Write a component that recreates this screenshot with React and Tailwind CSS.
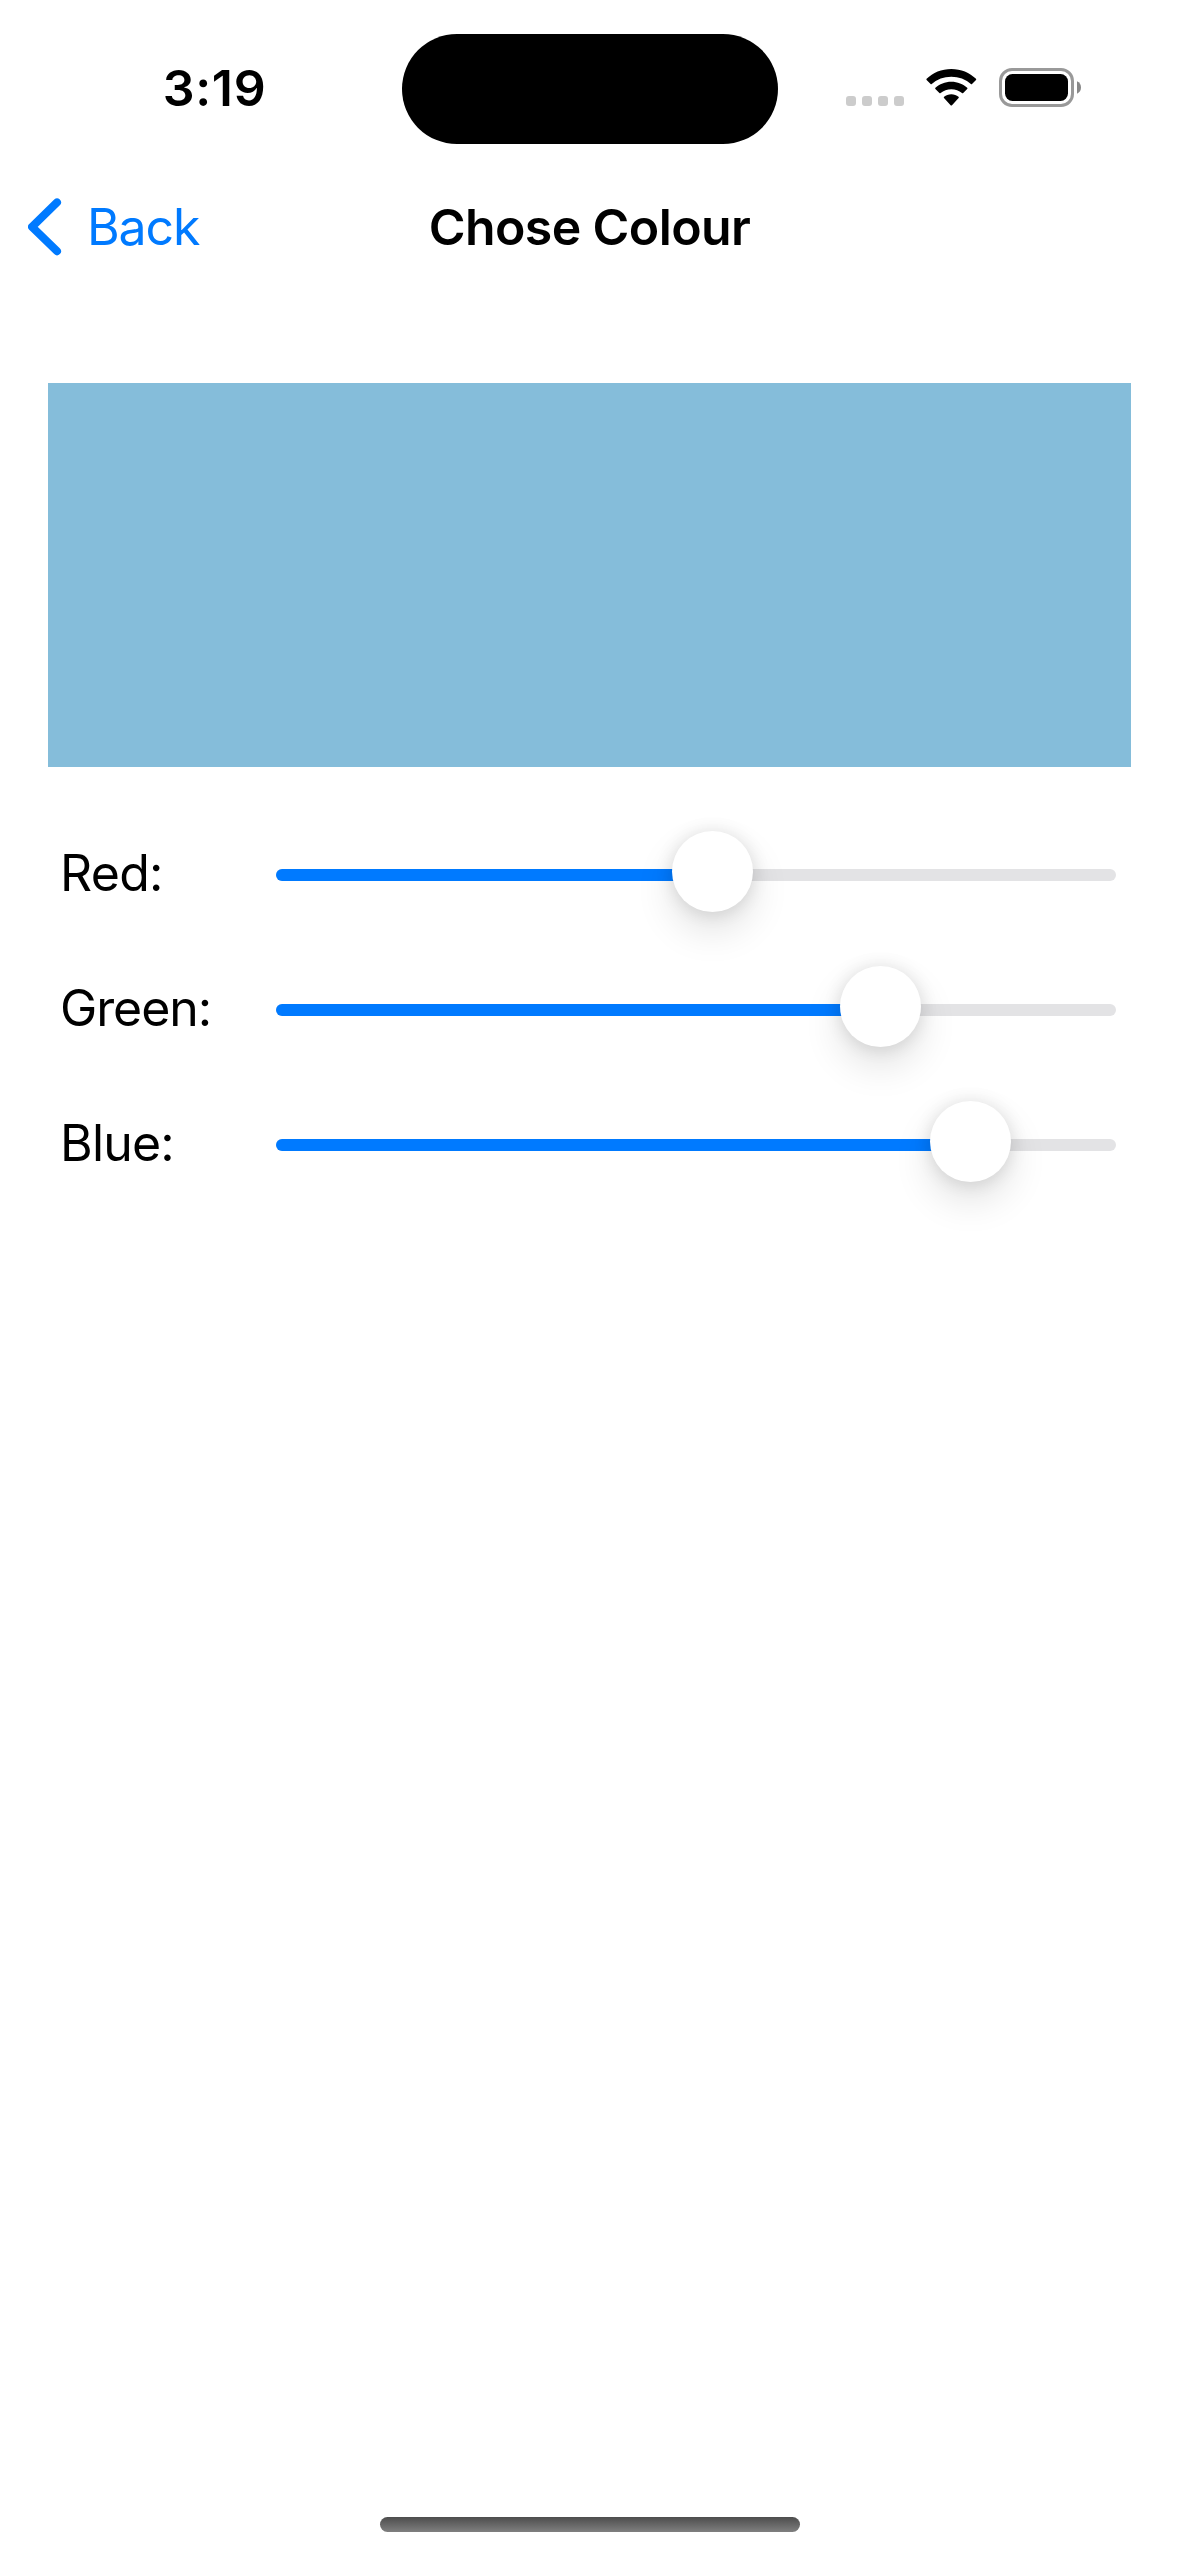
const CHANNELS = [
  { label: "Red:", offset: 396, spacing: "tracking-[-0.7px]" },
  { label: "Green:", offset: 564, spacing: "tracking-[-1.1px]" },
  { label: "Blue:", offset: 654, spacing: "tracking-[-0.8px]" },
];

function StatusBar() {
  return (
    <header className="flex h-[177px] items-start">
      <div className="flex w-[402px] justify-center pt-[58px] pl-[27px]">
        <span className="text-[50px] leading-[60px] font-semibold tracking-[0.7px]">3:19</span>
      </div>
      <div className="mt-[33.5px] h-[110.5px] w-[375.5px] rounded-full bg-black" />
      <div className="ml-[68.5px] flex items-start pt-[68px]">
        <div className="flex gap-[6px] pt-[28px]">
          {[0, 1, 2, 3].map((dot) => (
            <span key={dot} className="h-[10px] w-[10px] rounded-[3px] bg-[#cccccc]" />
          ))}
        </div>
        <svg className="mt-[1px] ml-[22px]" width="51" height="38" viewBox="0 0 51 38" fill="black">
          <path d="M25.3 0C15.600 0 6.900 3.700 0.600 9.800Q0.100 10.300 0.600 10.900L4.600 15Q5.100 15.500 5.700 15Q13.800 7.700 25.300 7.700Q36.800 7.700 44.900 15Q45.500 15.500 46 15L50 10.900Q50.500 10.300 50 9.800C43.700 3.700 35 0 25.300 0Z" />
          <path d="M25.300 12.700C19 12.700 13.500 15 9.400 18.800Q8.800 19.400 9.400 20L13.400 24Q14 24.600 14.600 24.100Q19.100 20.300 25.300 20.300Q31.500 20.300 36 24.100Q36.600 24.600 37.200 24L41.200 20Q41.800 19.400 41.200 18.800C37.100 15 31.600 12.700 25.300 12.700Z" />
          <path d="M25.300 25.300C22.500 25.300 20 26.200 18.100 27.700Q17.400 28.300 18 28.900L24.600 36.200Q25.300 37 26 36.200L32.600 28.900Q33.200 28.300 32.500 27.700C30.600 26.200 28.100 25.300 25.300 25.300Z" />
        </svg>
        <svg className="ml-[22px]" width="84" height="39" viewBox="0 0 84 39">
          <rect x="1.500" y="1.500" width="72" height="36" rx="11.500" fill="none" stroke="#999999" strokeWidth="3" />
          <rect x="6" y="6" width="63" height="27" rx="7.500" fill="black" />
          <path d="M78 13.300Q82 15.200 82 19.500Q82 23.800 78 25.700Z" fill="#888888" />
        </svg>
      </div>
    </header>
  );
}

function NavigationBar() {
  return (
    <nav className="grid h-[132px] grid-cols-3 pt-[20px]">
      <button className="flex items-start text-[#007aff]">
        <svg className="mt-[1px] ml-[28px]" width="34" height="58" viewBox="0 0 34 58" fill="none" stroke="currentColor" strokeWidth="8" strokeLinecap="round" strokeLinejoin="round">
          <path d="M29 4.400L4 28.900L29 53.200" />
        </svg>
        <span className="ml-[25px] text-[50px] leading-[60px] tracking-[-1.1px]">Back</span>
      </button>
      <h1 className="text-center text-[50px] leading-[60px] font-semibold tracking-[-0.6px] whitespace-nowrap">
        Chose Colour
      </h1>
    </nav>
  );
}

function ChannelSlider({ label, offset, spacing }) {
  return (
    <div className="flex h-[135px] items-start">
      <span className={`mt-[36px] ml-[60px] w-[216px] text-[50px] leading-[60px] ${spacing}`}>{label}</span>
      <div className="relative mt-[62px] h-[12px] w-[840px] rounded-full bg-[#e3e3e5]">
        <div className="h-full rounded-full bg-[#007aff]" style={{ width: offset + 40 }} />
        <div
          className="absolute -top-[38px] h-[81px] w-[81px] rounded-full bg-white shadow-[0_18px_39px_rgba(0,0,0,0.12),0_1px_18px_rgba(0,0,0,0.12)]"
          style={{ left: offset }}
        />
      </div>
    </div>
  );
}

export default function App() {
  return (
    <main className="flex h-[2556px] w-[1179px] flex-col bg-white font-['Inter',sans-serif] text-black">
      <StatusBar />
      <NavigationBar />
      <section className="mx-[48px] mt-[74px] h-[384px] bg-[#85bdda]" />
      <section className="pt-[40px]">
        {CHANNELS.map((channel) => (
          <ChannelSlider key={channel.label} {...channel} />
        ))}
      </section>
      <div className="mx-auto mt-auto mb-[24px] h-[15px] w-[420px] rounded-full bg-linear-to-b from-[#4d4d4d] to-[#808080]" />
    </main>
  );
}
